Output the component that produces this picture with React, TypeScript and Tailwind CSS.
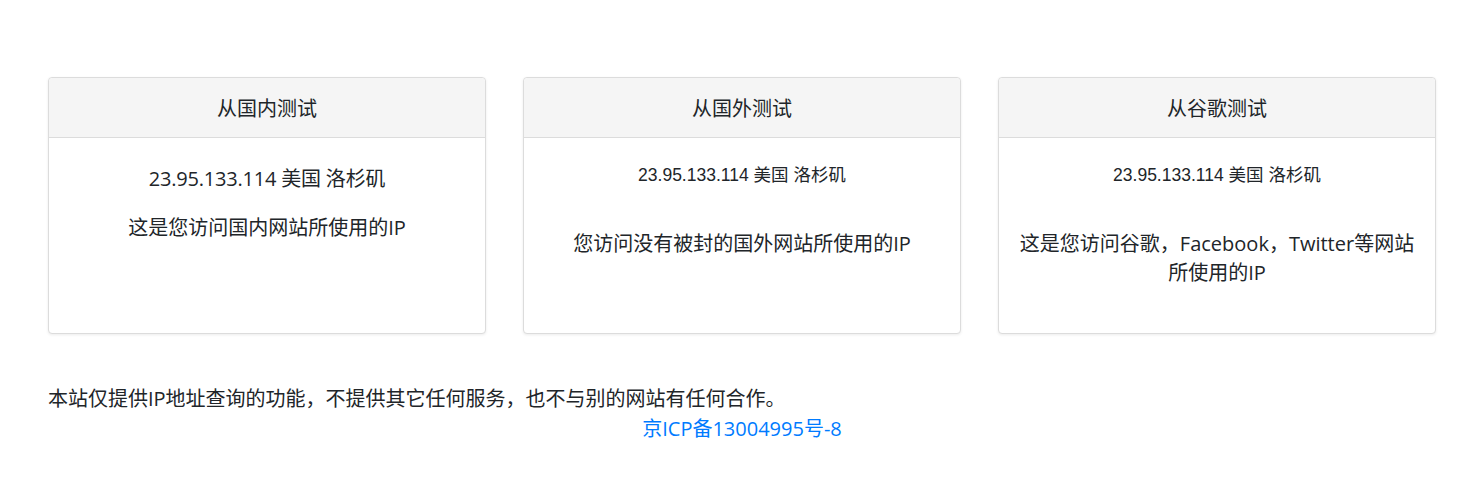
import React from "react";

const yahei = { fontFamily: '"Open Sans", "Noto Sans CJK SC", sans-serif' };
const arial = { fontFamily: '"Liberation Sans", "Noto Sans CJK SC", sans-serif' };

function Card({ title, children }: { title: string; children: React.ReactNode }) {
  return (
    <div className="flex flex-col rounded-[4px] border border-[#dcdcdc] bg-white shadow-[0_1px_3px_rgba(0,0,0,0.08)]">
      <div className="flex h-[60px] items-center justify-center rounded-t-[4px] border-b border-[#dcdcdc] bg-[#f5f5f5] pt-[2px] text-[20px] text-[#212529]">
        {title}
      </div>
      <div className="min-h-[195px] px-5 pt-[20px] text-center text-[#212529]">{children}</div>
    </div>
  );
}

export default function App() {
  return (
    <div className="min-h-[485px] bg-white pl-[48px] pr-[35px] pt-[77px]" style={yahei}>
      <div className="grid grid-cols-3 gap-[37px]">
        <Card title="从国内测试">
          <p className="mt-[6px] text-[20px] leading-[30px] tracking-[-0.2px]">23.95.133.114 美国 洛杉矶</p>
          <p className="mt-[19px] text-[20px] leading-[30px]">这是您访问国内网站所使用的IP</p>
        </Card>
        <Card title="从国外测试">
          <p className="mt-[4px] text-[17.5px] leading-[26px]" style={arial}>23.95.133.114 美国 洛杉矶</p>
          <p className="mt-[41px] text-[20px] leading-[30px]">您访问没有被封的国外网站所使用的IP</p>
        </Card>
        <Card title="从谷歌测试">
          <p className="mt-[4px] text-[17.5px] leading-[26px]" style={arial}>23.95.133.114 美国 洛杉矶</p>
          <p className="mt-[41px] text-[20px] leading-[29px]">
            这是您访问谷歌，Facebook，Twitter等网站
            <br />
            所使用的IP
          </p>
        </Card>
      </div>
      <p className="mt-[50px] text-[20px] leading-[30px] text-[#212529]">
        本站仅提供IP地址查询的功能，不提供其它任何服务，也不与别的网站有任何合作。
      </p>
      <div className="text-center text-[20px] leading-[30px]">
        <a className="text-[#007bff]" href="#">京ICP备13004995号-8</a>
      </div>
    </div>
  );
}
